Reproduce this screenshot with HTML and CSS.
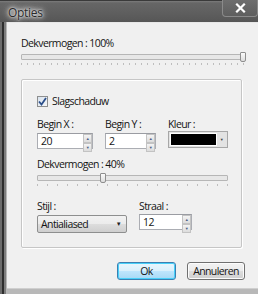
FILE: index.html
```html
<!DOCTYPE html>
<html lang="nl">
<head>
    <meta charset="UTF-8">
    <title>Opties</title>
    <link rel="stylesheet" href="styles.css">
</head>
<body>
    <div class="window">
        <div class="titlebar">
            <span class="title">Opties</span>
            <div class="close">
                <svg width="11" height="10" viewBox="0 0 11 10"><path d="M2 1.5 L9 8.5 M9 1.5 L2 8.5" stroke="#fff" stroke-width="2.2" stroke-linecap="square"/></svg>
            </div>
        </div>
        <div class="frame">
            <div class="client">
                <div class="label">Dekvermogen : 100%</div>
                <div class="slider">
                    <div class="track"></div>
                    <div class="thumb" style="left: 219px;"></div>
                </div>
                <div class="ticks"></div>

                <div class="group">
                    <div class="check">
                        <span class="box">
                            <svg width="9" height="9" viewBox="0 0 9 9"><path d="M1 4.5 L3.5 7.5 L8 1" fill="none" stroke="#2b4f8a" stroke-width="1.8"/></svg>
                        </span>
                        <span>Slagschaduw</span>
                    </div>

                    <div class="row">
                        <div class="field fx">
                            <div class="label">Begin X :</div>
                            <div class="spin">
                                <span class="val">20</span>
                                <span class="arrows"><span class="up">▲</span><span class="down">▼</span></span>
                            </div>
                        </div>
                        <div class="field fy">
                            <div class="label">Begin Y :</div>
                            <div class="spin">
                                <span class="val">2</span>
                                <span class="arrows"><span class="up">▲</span><span class="down">▼</span></span>
                            </div>
                        </div>
                        <div class="field fc">
                            <div class="label">Kleur :</div>
                            <div class="color">
                                <span class="swatch"></span>
                                <span class="drop">▼</span>
                            </div>
                        </div>
                    </div>

                    <div class="label sub">Dekvermogen : 40%</div>
                    <div class="slider small">
                        <div class="track"></div>
                        <div class="thumb" style="left: 63px;"></div>
                    </div>
                    <div class="ticks small"></div>

                    <div class="row bottom">
                        <div class="field fs">
                            <div class="label">Stijl :</div>
                            <div class="select">
                                <span>Antialiased</span>
                                <span class="caret">▼</span>
                            </div>
                        </div>
                        <div class="field fr">
                            <div class="label">Straal :</div>
                            <div class="spin">
                                <span class="val">12</span>
                                <span class="arrows"><span class="up">▲</span><span class="down">▼</span></span>
                            </div>
                        </div>
                    </div>
                </div>

                <div class="buttons">
                    <button class="btn default">Ok</button>
                    <button class="btn">Annuleren</button>
                </div>
            </div>
        </div>
    </div>
</body>
</html>
```

FILE: styles.css
```css
body {
    margin: 0;
    padding: 0;
    background-color: #f0f0f0;
    font-family: "Open Sans", "Noto Sans", sans-serif;
    font-size: 10.5px;
    letter-spacing: -0.6px;
    color: #141414;
}
.window {
    width: 258px;
    height: 294px;
    display: flex;
    flex-direction: column;
    overflow: hidden;
}
.titlebar {
    height: 22px;
    flex: none;
    display: flex;
    align-items: flex-start;
    justify-content: space-between;
    background: linear-gradient(to bottom, #7c7c7c 0, #666666 2px, #5e5e5e 60%, #565656 100%);
    border-top: 1px solid #3a3a3a;
    box-sizing: border-box;
}
.title {
    margin-left: 8px;
    margin-top: 3px;
    font-size: 12px;
    letter-spacing: -0.3px;
    color: #2a2a2a;
    text-shadow: 0 0 2px #ececec, 0 0 4px #e0e0e0, 0 0 6px #d4d4d4, 0 0 9px #c4c4c4;
}
.close {
    width: 36px;
    height: 17px;
    box-sizing: border-box;
    margin-top: -1px;
    border: 1px solid #8a8a8a;
    border-top: none;
    border-radius: 0 0 4px 4px;
    background: linear-gradient(to bottom, #6e6e6e, #5e5e5e);
    display: flex;
    align-items: center;
    justify-content: center;
}
.frame {
    flex: 1;
    display: flex;
    padding-left: 7px;
    background: linear-gradient(to right, #6c6c6c 0, #6c6c6c 2px, #2e2e2e 2px, #2e2e2e 4px, #7d7d7d 4px, #7d7d7d 6px, #b8b8b8 6px, #b8b8b8 7px);
}
.client {
    flex: 1;
    display: flex;
    flex-direction: column;
    padding: 13px 13px 0 14px;
    background-color: #f0f0f0;
    border-top: 1px solid #e8e8e8;
    border-bottom: 1px solid #cfcfcf;
    margin-bottom: 5px;
}
.label {
    line-height: 14px;
    height: 14px;
    white-space: nowrap;
}
.slider {
    position: relative;
    height: 10px;
    margin-top: 2px;
    width: 223px;
}
.track {
    margin-top: 2px;
    height: 4px;
    border: 1px solid #b6b6b6;
    border-radius: 1px;
    background-color: #e7e7e7;
}
.thumb {
    position: absolute;
    top: 0;
    width: 4px;
    height: 8px;
    border: 1px solid #8e8e8e;
    border-radius: 1px 1px 2px 2px;
    background: linear-gradient(to bottom, #fbfbfb, #dcdcdc);
}
.ticks {
    height: 2px;
    margin-top: 1px;
    width: 223px;
    background: repeating-linear-gradient(to right, #a8a8a8 0, #a8a8a8 1px, transparent 1px, transparent 6px);
    opacity: 0.7;
}
.group {
    margin-top: 14px;
    width: 221px;
    height: 169px;
    border: 1px solid #c6c6c6;
    box-shadow: inset 1px 1px 0 #ffffff, 1px 1px 0 #ffffff;
    border-radius: 2px;
    padding: 15px 0 0 15px;
    box-sizing: border-box;
    display: flex;
    flex-direction: column;
}
.check {
    display: flex;
    align-items: center;
    gap: 4px;
    height: 12px;
}
.box {
    width: 9px;
    height: 9px;
    border: 1px solid #8e8f8f;
    background: linear-gradient(to bottom right, #d9e3ee, #f4f6f9);
    display: flex;
    align-items: center;
    justify-content: center;
}
.row {
    display: flex;
    margin-top: 10px;
}
.field {
    display: flex;
    flex-direction: column;
    gap: 2px;
}
.fx { width: 56px; margin-right: 12px; }
.fy { width: 51px; margin-right: 12px; }
.fc { width: 60px; }
.spin {
    height: 16px;
    box-sizing: border-box;
    border: 1px solid #abadb3;
    border-top-color: #9a9ca2;
    background-color: #ffffff;
    display: flex;
    justify-content: space-between;
}
.val {
    padding-left: 3px;
    line-height: 14px;
}
.arrows {
    width: 9px;
    display: flex;
    flex-direction: column;
}
.arrows span {
    flex: 1;
    font-size: 4px;
    line-height: 7px;
    text-align: center;
    color: #4d6185;
    background: linear-gradient(to bottom, #f4f4f4, #dcdcdc);
    border: 1px solid #c3c3c3;
    box-sizing: border-box;
}
.color {
    height: 17px;
    margin-top: -2px;
    box-sizing: border-box;
    border: 1px solid #a7a7a7;
    background-color: #e3e3e3;
    display: flex;
    padding: 1px;
}
.swatch {
    flex: 1;
    background-color: #000000;
    border: 1px solid #ffffff;
}
.drop {
    width: 9px;
    font-size: 4px;
    line-height: 13px;
    text-align: center;
    color: #444;
}
.sub {
    margin-top: 8px;
}
.slider.small,
.ticks.small {
    width: 191px;
}
.ticks.small {
    background: repeating-linear-gradient(to right, #a8a8a8 0, #a8a8a8 1px, transparent 1px, transparent 10px);
}
.bottom {
    margin-top: 13px;
}
.fs { width: 90px; margin-right: 12px; }
.fr { width: 53px; }
.select {
    height: 18px;
    box-sizing: border-box;
    border: 1px solid #8e8f8f;
    border-radius: 2px;
    background: linear-gradient(to bottom, #f2f2f2 0, #ebebeb 50%, #dddddd 51%, #cfcfcf 100%);
    display: flex;
    align-items: center;
    justify-content: space-between;
    padding: 0 5px 0 3px;
}
.caret {
    font-size: 6px;
    color: #222;
}
.fr .spin {
    margin-top: -1px;
}
.buttons {
    display: flex;
    justify-content: flex-end;
    gap: 11px;
    margin-top: 14px;
}
.btn {
    font-family: inherit;
    font-size: 10.5px;
    letter-spacing: inherit;
    color: #141414;
    height: 18px;
    width: 58px;
    padding: 0;
    border: 1px solid #707070;
    border-radius: 3px;
    background: linear-gradient(to bottom, #f2f2f2 0, #ebebeb 50%, #dddddd 51%, #cfcfcf 100%);
    box-shadow: inset 0 0 0 1px #fcfcfc;
}
.btn.default {
    width: 59px;
    border-color: #3c7fb1;
    background: linear-gradient(to bottom, #eaf6fd 0, #d9f0fc 50%, #bee6fd 51%, #a7d9f5 100%);
    box-shadow: inset 0 0 0 1px #48d0f9;
}
```
